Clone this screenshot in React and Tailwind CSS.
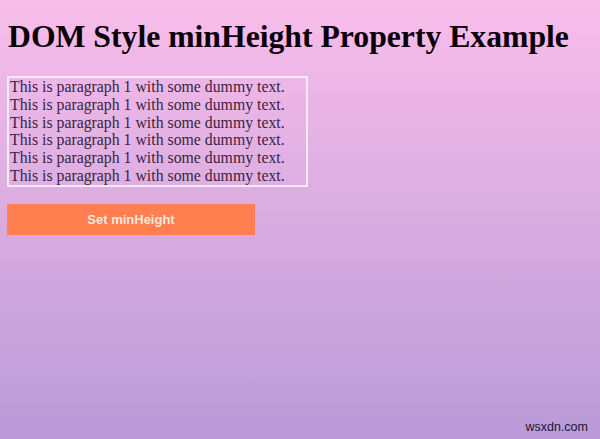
export default function App() {
  return (
    <div className="relative min-h-[439px] bg-gradient-to-b from-[#f9bdea] to-[#b99bd7] px-2 pt-[18px] font-['Liberation_Serif',serif]">
      <h1 className="text-[31.7px] leading-[38px] font-bold text-[#0a0008]">
        DOM Style minHeight Property Example
      </h1>
      <div className="mt-[20px] w-[301px] -ml-px border-2 border-[#f6eaf6] px-px text-[15.8px] leading-[17.8px] text-[#3a2440]">
        <p>This is paragraph 1 with some dummy text.</p>
        <p>This is paragraph 1 with some dummy text.</p>
        <p>This is paragraph 1 with some dummy text.</p>
        <p>This is paragraph 1 with some dummy text.</p>
        <p>This is paragraph 1 with some dummy text.</p>
        <p>This is paragraph 1 with some dummy text.</p>
      </div>
      <button className="mt-[17px] -ml-px h-[31px] w-[248px] bg-[#ff7f50] font-['Liberation_Sans',sans-serif] text-[13px] font-bold text-[#fbe6dc]">
        Set minHeight
      </button>
      <span className="absolute right-[12px] bottom-[2px] font-['Liberation_Sans',sans-serif] text-[12.5px] text-[#1e1430]">
        wsxdn.com
      </span>
    </div>
  );
}
